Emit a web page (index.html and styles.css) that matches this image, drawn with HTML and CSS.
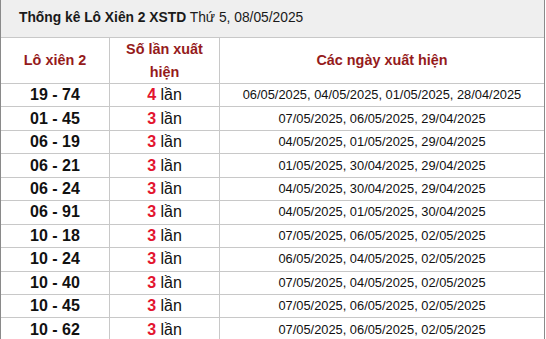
FILE: index.html
```html
<!DOCTYPE html>
<html lang="vi">
<head>
<meta charset="utf-8">
<link rel="stylesheet" href="styles.css">
</head>
<body>
<div class="box">
  <div class="title"><b>Thống kê Lô Xiên 2 XSTD</b> Thứ 5, 08/05/2025</div>
  <table class="stats">
    <colgroup><col class="c1"><col class="c2"><col class="c3"></colgroup>
    <thead>
      <tr><th>Lô xiên 2</th><th>Số lần xuất<br>hiện</th><th class="last">Các ngày xuất hiện</th></tr>
    </thead>
    <tbody>
      <tr><td class="pair">19 - 74</td><td class="cnt"><b>4</b> lần</td><td class="dates">06/05/2025, 04/05/2025, 01/05/2025, 28/04/2025</td></tr>
      <tr><td class="pair">01 - 45</td><td class="cnt"><b>3</b> lần</td><td class="dates">07/05/2025, 06/05/2025, 29/04/2025</td></tr>
      <tr><td class="pair">06 - 19</td><td class="cnt"><b>3</b> lần</td><td class="dates">04/05/2025, 01/05/2025, 29/04/2025</td></tr>
      <tr><td class="pair">06 - 21</td><td class="cnt"><b>3</b> lần</td><td class="dates">01/05/2025, 30/04/2025, 29/04/2025</td></tr>
      <tr><td class="pair">06 - 24</td><td class="cnt"><b>3</b> lần</td><td class="dates">04/05/2025, 30/04/2025, 29/04/2025</td></tr>
      <tr><td class="pair">06 - 91</td><td class="cnt"><b>3</b> lần</td><td class="dates">04/05/2025, 01/05/2025, 30/04/2025</td></tr>
      <tr><td class="pair">10 - 18</td><td class="cnt"><b>3</b> lần</td><td class="dates">07/05/2025, 06/05/2025, 02/05/2025</td></tr>
      <tr><td class="pair">10 - 24</td><td class="cnt"><b>3</b> lần</td><td class="dates">06/05/2025, 04/05/2025, 02/05/2025</td></tr>
      <tr><td class="pair">10 - 40</td><td class="cnt"><b>3</b> lần</td><td class="dates">07/05/2025, 04/05/2025, 02/05/2025</td></tr>
      <tr><td class="pair">10 - 45</td><td class="cnt"><b>3</b> lần</td><td class="dates">07/05/2025, 06/05/2025, 02/05/2025</td></tr>
      <tr><td class="pair">10 - 62</td><td class="cnt"><b>3</b> lần</td><td class="dates">07/05/2025, 06/05/2025, 02/05/2025</td></tr>
    </tbody>
  </table>
</div>
</body>
</html>
```

FILE: styles.css
```css
html, body {
  margin: 0;
  padding: 0;
  background: #ffffff;
}
body {
  font-family: "Liberation Sans", Arial, sans-serif;
  color: #111111;
}
.box {
  width: 545px;
  box-sizing: border-box;
  border-left: 1px solid #8a8a8a;
  border-right: 1px solid #8a8a8a;
}
.title {
  height: 37px;
  line-height: 36px;
  background: #efefef;
  border-bottom: 1px solid #c8c8c8;
  padding-left: 18px;
  font-size: 13.8px;
  color: #1a1a1a;
}
.title b {
  font-weight: bold;
}
.stats {
  width: 100%;
  table-layout: fixed;
  border-collapse: separate;
  border-spacing: 0;
}
.c1 { width: 109px; }
.c2 { width: 110px; }
.stats th,
.stats td {
  padding: 0;
  border-right: 1px solid #c8c8c8;
  border-bottom: 1px solid #c8c8c8;
  text-align: center;
  vertical-align: middle;
}
.stats th:last-child,
.stats td:last-child {
  border-right: none;
}
.stats th {
  height: 45px;
  line-height: 22.5px;
  font-size: 14.4px;
  font-weight: bold;
  color: #951b1b;
}
.stats td {
  height: 22.44px;
  line-height: 20px;
}
.pair {
  font-size: 16px;
  font-weight: bold;
  color: #111111;
}
.cnt {
  font-size: 16px;
  color: #111111;
}
.cnt b {
  color: #e3152f;
  font-weight: bold;
}
.dates {
  font-size: 12.85px;
  color: #111111;
}
```
